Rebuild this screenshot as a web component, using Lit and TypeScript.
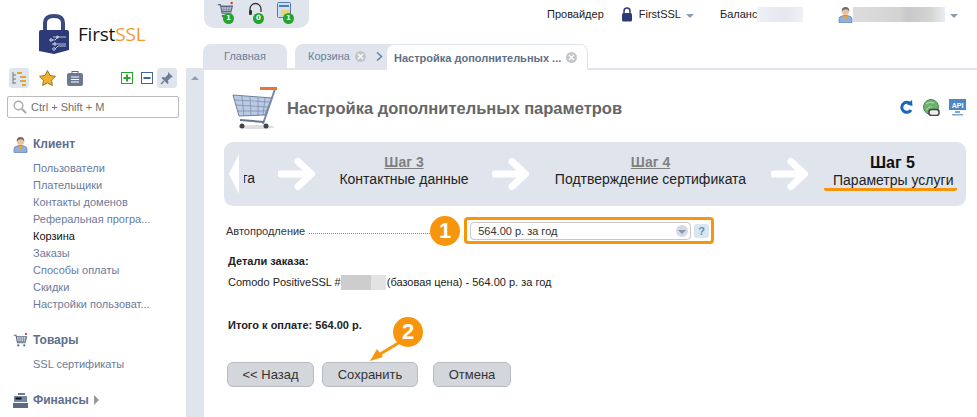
import { LitElement, html, css } from "lit";
import { customElement } from "lit/decorators.js";

const arrow = html`<svg class="step-arrow" width="38" height="32" viewBox="0 0 38 32"><path d="M3 16H33M20 3.500 33.500 16 20 28.500" fill="none" stroke="#fff" stroke-width="7" stroke-linecap="round" stroke-linejoin="round"/></svg>`;

const cart = (w: number, h: number, c = "#5b6b82") => html`<svg width=${w} height=${h} viewBox="0 0 20 20"><path d="M1 3h3l2 10h11M4.500 5H18l-1.500 6H6" fill="none" stroke=${c} stroke-width="1.500"/><path d="M6 7h11M6 9h11M8 5v6M11 5v6M14 5v6" stroke=${c} stroke-width=".7"/><circle cx="7" cy="16.500" r="1.500" fill=${c}/><circle cx="15" cy="16.500" r="1.500" fill=${c}/><rect x="16" y="0" width="2.500" height="2.500" fill="#d33"/></svg>`;

const person = html`<svg width="15" height="17" viewBox="0 0 15 17"><path d="M1 16.500v-3.500q0-2.500 3-3l3.500-1 3.500 1q3 .5 3 3v3.500z" fill="#8fb0de" stroke="#5a7fb5" stroke-width=".7"/><path d="M5.500 10 7.500 15 9.500 10z" fill="#f0a030"/><circle cx="7.500" cy="5.500" r="3.600" fill="#eec39a"/><path d="M3.700 5.500Q3.500 1 7.500 1t3.800 4.500Q10 3 7.500 3.200T3.700 5.500z" fill="#6a6a6a"/></svg>`;

const closeX = html`<span class="x"><svg width="7" height="7" viewBox="0 0 7 7"><path d="M1 1l5 5M6 1 1 6" stroke="#fff" stroke-width="1.200"/></svg></span>`;

@customElement("app-root")
export class AppRoot extends LitElement {
  static styles = css`
    :host { display: block; width: 977px; height: 417px; overflow: hidden; position: relative; background: #fff; font-family: "Liberation Sans", Arial, sans-serif; font-size: 11px; color: #222; }
    .app { display: grid; grid-template-columns: 186px 1fr; height: 417px; }
    .side { display: flex; flex-direction: column; min-width: 0; }
    .logo { display: flex; align-items: center; height: 68px; padding-left: 39px; gap: 9px; box-sizing: border-box; }
    .logo-text { font-family: "Open Sans", sans-serif; font-size: 19px; color: #141416; letter-spacing: -0.200px; }
    .logo-text b { font-weight: 400; color: #f39a2b; }
    .tools { display: flex; align-items: center; height: 20px; padding-left: 9px; padding-right: 9px; }
    .tool { width: 20px; height: 20px; border-radius: 3px; display: flex; align-items: center; justify-content: center; margin-right: 8px; }
    .tool.on { background: #e0e5ed; }
    .tool.plus { margin: 0 6px 0 auto; width: 14px; }
    .tool.minus { margin: 0 3px 0 0; width: 14px; }
    .tool.pin { margin: 0; }
    .search { display: flex; align-items: center; gap: 4px; margin: 8px 7px 0; height: 20px; border: 1px solid #bbb; border-radius: 2px; padding-left: 5px; color: #6f6f6f; font-size: 11px; width: 165px; box-sizing: content-box; }
    .nav { padding: 17px 0 0 13px; }
    .group { margin-bottom: 18px; }
    .gh { display: flex; align-items: center; gap: 5px; height: 18px; font-size: 12px; font-weight: 700; color: #5d6e8e; margin-bottom: 7px; }
    .gh .ic { width: 15px; display: flex; }
    .item { display: block; padding-left: 20px; height: 17px; line-height: 17px; color: #6b7b9c; font-size: 11px; white-space: nowrap; }
    .item.cur { color: #111; }
    .tri { width: 0; height: 0; border-left: 5px solid #999; border-top: 5px solid transparent; border-bottom: 5px solid transparent; }

    .main { display: flex; flex-direction: column; min-width: 0; }
    .head { height: 42px; display: flex; }
    .quick { margin-left: 18px; width: 105px; height: 28px; background: #e0e5ed; border-radius: 0 0 10px 10px; display: flex; gap: 13px; padding: 2px 0 0 13px; box-sizing: border-box; }
    .qi { position: relative; width: 17px; height: 17px; }
    .badge { position: absolute; left: 6px; top: 11px; width: 11px; height: 11px; border-radius: 50%; background: #22a52a; color: #fff; font: 700 7px/11px "DejaVu Sans", sans-serif; text-align: center; }
    .top { flex: 1; display: flex; align-items: center; height: 28px; color: #222; padding-left: 238px; font-size: 11px; }
    .top .prov { margin-right: 17px; }
    .top .ssl { display: flex; align-items: center; gap: 6px; }
    .caret { width: 0; height: 0; border-top: 4px solid #8d9bb5; border-left: 4px solid transparent; border-right: 4px solid transparent; margin-left: 5px; margin-top: 3px; }
    .blur { display: inline-block; height: 15px; }
    .bal { margin-left: 26px; display: flex; align-items: center; }
    .user { margin-left: 35px; display: flex; align-items: center; }
    .blur-bal { width: 46px; background: linear-gradient(90deg, #eef1f5, #e3e7ee 60%, #eef1f5); }
    .blur-user { width: 92px; background: linear-gradient(90deg, #ddd, #d2d4d2 50%, #c9c7cb 60%, #d3d5d3 85%, #e9edf2); }
    .tabs { height: 26px; display: flex; align-items: flex-end; padding-left: 17px; border-bottom: 2px solid #e0e5ed; box-sizing: content-box; }
    .tab { height: 24px; background: #e0e5ed; border-radius: 8px 8px 0 0; display: flex; align-items: center; color: #6c7d97; font-size: 11px; box-sizing: border-box; }
    .t1 { width: 84px; justify-content: center; margin-right: 8px; }
    .t2 { width: 97px; padding-left: 13px; gap: 5px; border-radius: 8px 0 0 0; }
    .t3 { width: 202px; margin-left: -6px; padding-left: 7px; background: #fff; gap: 5px; height: 26px; margin-bottom: -2px; border: 1px solid #e0e5ed; border-bottom: none; border-radius: 8px 8px 0 0; font-weight: 700; color: #5f6f86; white-space: nowrap; z-index: 1; }
    .x { width: 11px; height: 11px; border-radius: 50%; background: #c3c6cb; color: #fff; display: inline-flex; align-items: center; justify-content: center; flex: none; }
    .chev { margin-left: 5px; display: flex; }

    .body { flex: 1; display: grid; grid-template-columns: 18px 1fr; min-height: 0; }
    .gutter { background: #e0e5ed; position: relative; }
    .up { position: absolute; left: 5px; top: 6px; width: 0; height: 0; border-bottom: 4px solid #8fa0bb; border-left: 4px solid transparent; border-right: 4px solid transparent; }
    .content { padding: 0 11px 0 20px; min-width: 0; position: relative; }
    .title { display: flex; align-items: center; height: 58px; margin-top: 9px; margin-left: 8px; }
    h1 { margin: 0 0 0 9px; font-size: 16.500px; font-weight: 700; color: #666; white-space: nowrap; }
    .acts { margin-left: auto; display: flex; gap: 9px; margin-top: -2px; }
    .band { height: 64px; margin-top: 5px; background: #e0e5ed; border-radius: 9px; display: flex; align-items: center; position: relative; overflow: hidden; }
    .back { width: 0; height: 0; border-right: 10px solid #fff; border-top: 20px solid transparent; border-bottom: 20px solid transparent; margin-left: 5px; flex: none; }
    .clip { width: 11px; margin: 0 23px 0 5px; padding-top: 8px; display: flex; justify-content: flex-end; overflow: hidden; white-space: nowrap; font-size: 14px; flex: none; }
    .st { text-align: center; white-space: nowrap; font-size: 14px; color: #222; line-height: 16px; flex: none; padding-bottom: 8px; }
    .st u { display: block; color: #808080; font-weight: 700; line-height: 17px; }
    .st3 { width: 176px; }
    .st4 { width: 241px; }
    .st5 { width: 167px; padding-bottom: 3px; }
    .st strong { display: block; font-size: 16px; color: #111; line-height: 17px; }
    .ul { display: block; width: fit-content; margin: 1px 0 0 15px; box-sizing: content-box; border-bottom: 3px solid #f7950c; border-radius: 2px; padding: 0 4px 0 9px; line-height: 16px; }
    .step-arrow { flex: none; }
    .form { position: relative; display: flex; align-items: center; height: 27px; margin-top: 11px; margin-left: 2px; }
    .label { color: #333; }
    .dots { width: 121px; border-bottom: 1px dotted #888; margin: 5px 0 0 4px; }
    .select { margin-left: 40px; width: 221px; height: 18px; box-sizing: border-box; border: 1px solid #c9c9c9; border-radius: 4px; display: flex; align-items: center; padding: 0 2px 0 7px; justify-content: space-between; color: #333; }
    .sbtn { width: 12px; height: 12px; border-radius: 50%; background: #d4d9e2; display: flex; align-items: center; justify-content: center; }
    .sbtn i { width: 0; height: 0; border-top: 4px solid #8897b3; border-left: 4px solid transparent; border-right: 4px solid transparent; margin-top: 2px; }
    .help { width: 15px; height: 14px; margin-left: 3px; border-radius: 3px; background: #d9e6f0; color: #5d93bd; font-weight: 700; font-size: 11px; text-align: center; line-height: 14px; }
    .frame { position: absolute; left: 238px; top: 0; width: 250px; height: 27px; box-sizing: border-box; border: 3px solid #f7950c; border-radius: 4px; pointer-events: none; }
    .num { position: absolute; width: 30px; height: 30px; border-radius: 50%; background: #f7950c; color: #fff; font-weight: 700; font-size: 22px; line-height: 30px; text-align: center; }
    .n1 { left: 204px; top: -1px; }
    .n2 { left: 189px; top: 247px; }
    .details { margin: 11px 0 0 4px; color: #222; }
    .details b { display: block; }
    .line { margin-top: 8px; display: flex; align-items: center; line-height: 13px; }
    .mask { display: inline-block; width: 45px; height: 15px; background: linear-gradient(90deg, #cdcdcd 0 66%, #e3e3e3 66%); margin: 0 1px 0 0; }
    .details .total { margin-top: 29px; }
    .btns { display: flex; margin: 31px 0 0 3px; }
    .btn { height: 25px; box-sizing: border-box; border: 1px solid #b8bcc2; border-radius: 6px; background: #d3d6db; color: #333; font: 13px "Liberation Sans", sans-serif; padding: 0; }
    .b1 { width: 87px; margin-right: 8px; }
    .b2 { width: 96px; margin-right: 15px; }
    .b3 { width: 78px; }
    .pt { position: absolute; left: 165px; top: 266px; pointer-events: none; }
  `;

  render() {
    return html`
      <div class="app">
        <aside class="side">
          <div class="logo">
            <svg width="30" height="41" viewBox="0 0 30 41">
              <path d="M6 18V9Q6 2 15 2t9 7v9" fill="none" stroke="#3a4a7e" stroke-width="4"/>
              <path d="M0 18Q0 16 2 16H28Q30 16 30 18V36L15 40 0 37Z" fill="#2c3a78"/>
              <g stroke="#dfe5f2" stroke-width=".8" fill="none"><path d="M14 23h13M11 26h5l3-3M18 30h9M13 30l4 0M16 35l3-3h8"/><circle cx="12" cy="26" r="1.300"/><circle cx="18.500" cy="23" r="1"/><circle cx="16" cy="30" r="1.300"/><circle cx="15" cy="35" r="1.300"/></g>
            </svg>
            <span class="logo-text">First<b>SSL</b></span>
          </div>
          <div class="tools">
            <div class="tool on"><svg width="14" height="15" viewBox="0 0 14 15"><path d="M1 1v12M1 4h3M1 8h3M1 12h3M5 2h3M8 6h3M8 10h3" stroke="#777" fill="none"/><path d="M6 1h4v2H6zM10 5h4v2h-4zM10 9h4v2h-4zM10 13h4v2h-4z" fill="#e5a51e"/></svg></div>
            <div class="tool"><svg width="17" height="16" viewBox="0 0 17 16"><path d="M8.500 .5 11 5.500l5.500.8-4 3.900.9 5.300-4.900-2.600-4.900 2.600.9-5.300-4-3.900L6 5.500z" fill="#f3b02c" stroke="#a9741d"/></svg></div>
            <div class="tool"><svg width="16" height="15" viewBox="0 0 16 15"><rect x="5" y="0.500" width="6" height="3" fill="none" stroke="#5c6b80"/><rect y="2" width="16" height="13" rx="2" fill="#6b7a92"/><path d="M4 6h8M4 8.500h8M4 11h8" stroke="#fff"/></svg></div>
            <div class="tool plus"><svg width="12" height="12" viewBox="0 0 12 12"><rect x=".5" y=".5" width="11" height="11" fill="#fff" stroke="#2aa52c"/><path d="M6 2.500v7M2.500 6h7" stroke="#2aa52c" stroke-width="2"/></svg></div>
            <div class="tool minus"><svg width="12" height="12" viewBox="0 0 12 12"><rect x=".5" y=".5" width="11" height="11" fill="#fff" stroke="#43659c"/><path d="M2.500 6h7" stroke="#43659c" stroke-width="2"/></svg></div>
            <div class="tool on pin"><svg width="14" height="14" viewBox="0 0 14 14"><path d="M8 1l5 5-2 .5-3 3 .5 2.500-1 1-6-6 1-1L5 6.500l3-3z" fill="#6d7f99"/><path d="M4 10 1 13" stroke="#6d7f99" stroke-width="1.500"/></svg></div>
          </div>
          <div class="search">
            <svg width="14" height="14" viewBox="0 0 14 14"><circle cx="5.500" cy="5.500" r="4.300" fill="none" stroke="#a9a9a9" stroke-width="1.400"/><path d="M8.700 8.700 13 13" stroke="#a9a9a9" stroke-width="2"/></svg>
            <span>Ctrl + Shift + M</span>
          </div>
          <nav class="nav">
            <div class="group">
              <div class="gh"><span class="ic">${person}</span>Клиент</div>
              ${["Пользователи", "Плательщики", "Контакты доменов", "Реферальная програ...", "Корзина", "Заказы", "Способы оплаты", "Скидки", "Настройки пользоват..."].map((t) => html`<a class="item ${t === "Корзина" ? "cur" : ""}">${t}</a>`)}
            </div>
            <div class="group">
              <div class="gh"><span class="ic">${cart(15, 15)}</span>Товары</div>
              <a class="item">SSL сертификаты</a>
            </div>
            <div class="group">
              <div class="gh"><span class="ic"><svg width="15" height="15" viewBox="0 0 15 15"><rect x="5" y="0" width="7" height="2" fill="#6f7d92"/><rect x="1" y="3" width="13" height="6" fill="#7487a5"/><rect x="2.500" y="4.500" width="6" height="2" fill="#111"/><rect y="10" width="15" height="5" fill="#5b6b82"/></svg></span>Финансы<span class="tri"></span></div>
            </div>
          </nav>
        </aside>
        <main class="main">
          <div class="head">
            <div class="quick">
              <div class="qi">${cart(17, 17)}<span class="badge">1</span></div>
              <div class="qi"><svg width="17" height="17" viewBox="0 0 17 17"><path d="M3 10V7a5.500 5.500 0 0 1 11 0v3" fill="none" stroke="#333" stroke-width="1.300"/><rect x="2" y="8" width="3" height="5" rx="1" fill="#333"/></svg><span class="badge">0</span></div>
              <div class="qi"><svg width="15" height="17" viewBox="0 0 15 17"><rect x=".5" y=".5" width="13" height="15" rx="1" fill="#cfe0f4" stroke="#4f7ab5"/><rect x="2" y="3" width="10" height="2" fill="#4f7ab5"/><rect x="4" y="8" width="9" height="6" fill="#e8d47a"/></svg><span class="badge">1</span></div>
            </div>
            <div class="top">
              <span class="prov">Провайдер</span>
              <span class="ssl"><svg width="12" height="15" viewBox="0 0 12 15"><path d="M3 6V4a3 3 0 0 1 6 0v2" fill="none" stroke="#2c3a78" stroke-width="1.500"/><rect x="1" y="6" width="10" height="8.500" rx="1.500" fill="#2c3a78"/></svg>FirstSSL</span><i class="caret"></i>
              <span class="bal">Баланс<span class="blur blur-bal"></span></span>
              <span class="user">${person}<span class="blur blur-user"></span><i class="caret"></i></span>
            </div>
          </div>
          <div class="tabs">
            <div class="tab t1">Главная</div>
            <div class="tab t2">Корзина ${closeX}<span class="chev"><svg width="7" height="9" viewBox="0 0 7 9"><path d="M1 .5 5.500 4.500 1 8.500" fill="none" stroke="#5d85a8" stroke-width="1.500"/></svg></span></div>
            <div class="tab t3">Настройка дополнительных ... ${closeX}</div>
          </div>
          <div class="body">
            <div class="gutter"><i class="up"></i></div>
            <div class="content">
              <div class="title">
                <svg width="46" height="44" viewBox="0 0 46 44">
                  <path d="M1 9 40 12 33 29 7 30Z" fill="#bccbe4" stroke="#6d7f9e"/>
                  <path d="M3 14 38 16M4 19 36 21M6 25 34 25M10 10 12 30M18 11 19 30M26 11 26 30M33 12 31 29" stroke="#7e90ad" stroke-width=".8"/>
                  <path d="M43 3 31 38" stroke="#7a8aa6" stroke-width="2"/>
                  <path d="M28 2.500H45" stroke="#e8743a" stroke-width="3"/>
                  <path d="M8 34 32 36" stroke="#66758f" stroke-width="2"/>
                  <ellipse cx="24" cy="41" rx="18" ry="2" fill="#ddd"/>
                  <circle cx="10" cy="40" r="2.500" fill="#444"/><circle cx="34" cy="40" r="2.500" fill="#444"/>
                </svg>
                <h1>Настройка дополнительных параметров</h1>
                <div class="acts">
                  <svg width="15" height="16" viewBox="0 0 15 16"><path d="M11.500 5A5 5 0 1 0 12 11" fill="none" stroke="#1966b8" stroke-width="3"/><path d="M8 5.500 13.500 7 13 1z" fill="#1966b8"/></svg>
                  <svg width="17" height="17" viewBox="0 0 17 17"><circle cx="8" cy="8" r="7.500" fill="#6cb26a" stroke="#4d8a55"/><path d="M3 5q4-3 8-1M4 11q1-4 5-3" stroke="#b6dcb4" fill="none"/><rect x="6" y="10.500" width="10" height="6" rx="2.500" fill="#eee" stroke="#444" stroke-width="1.500"/></svg>
                  <svg width="17" height="17" viewBox="0 0 17 17"><rect x="0" y="0" width="17" height="11" fill="#4f86c6"/><text x="8.500" y="8.500" fill="#fff" font-size="7" font-weight="700" text-anchor="middle" font-family="Liberation Sans">API</text><path d="M6 12h5v2H6zM3 15h11v1.500H3z" fill="#7fa7d6"/></svg>
                </div>
              </div>
              <div class="band">
                <i class="back"></i>
                <div class="clip"><span>та</span></div>
                ${arrow}
                <div class="st st3"><u>Шаг 3</u>Контактные данные</div>
                ${arrow}
                <div class="st st4"><u>Шаг 4</u>Подтверждение сертификата</div>
                ${arrow}
                <div class="st st5"><strong>Шаг 5</strong><span class="ul">Параметры услуги</span></div>
              </div>
              <div class="form">
                <span class="label">Автопродление</span><i class="dots"></i>
                <div class="select">564.00 р. за год<span class="sbtn"><i></i></span></div>
                <div class="help">?</div>
                <div class="frame"></div>
                <div class="num n1">1</div>
              </div>
              <div class="details">
                <b>Детали заказа:</b>
                <div class="line">Comodo PositiveSSL #<span class="mask"></span>(базовая цена) - 564.00 р. за год</div>
                <b class="total">Итого к оплате: 564.00 р.</b>
              </div>
              <div class="btns">
                <button class="btn b1">&lt;&lt; Назад</button>
                <button class="btn b2">Сохранить</button>
                <button class="btn b3">Отмена</button>
              </div>
              <svg class="pt" width="40" height="28" viewBox="0 0 40 28"><path d="M36 3 8 20" stroke="#f7950c" stroke-width="3"/><path d="M1 25 14 21 8 13z" fill="#f7950c"/></svg>
              <div class="num n2">2</div>
            </div>
          </div>
        </main>
      </div>
    `;
  }
}
